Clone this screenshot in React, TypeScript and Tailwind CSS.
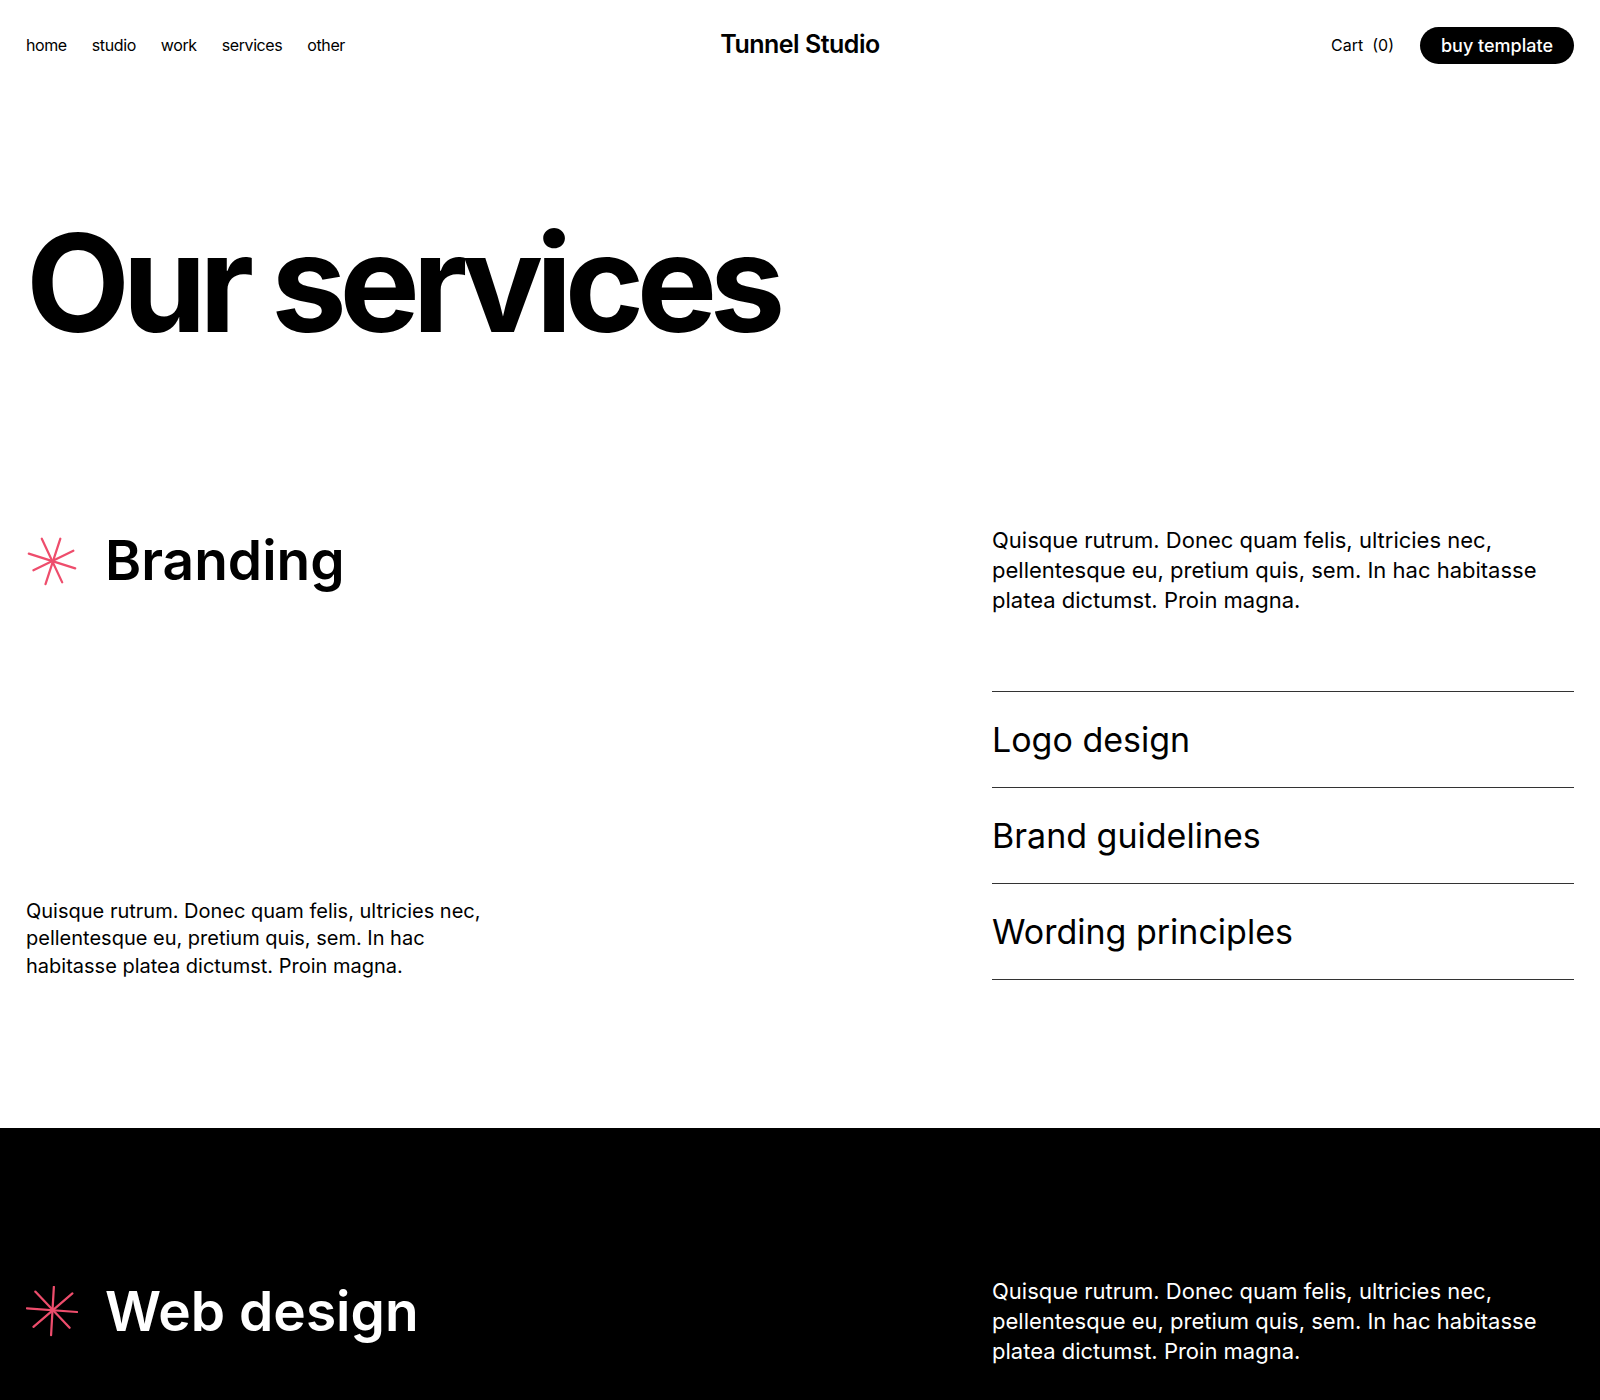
const items = ["Logo design", "Brand guidelines", "Wording principles"];

const copy =
  "Quisque rutrum. Donec quam felis, ultricies nec, pellentesque eu, pretium quis, sem. In hac habitasse platea dictumst. Proin magna.";

function BrandingStar() {
  return (
    <svg width="52" height="52" viewBox="4 4 56 56" fill="none" className="shrink-0">
      <g stroke="#ee4d6c" strokeWidth="2.4" strokeLinecap="round">
        <line x1="7" y1="24" x2="57" y2="40" />
        <line x1="12" y1="42" x2="55" y2="21" />
        <line x1="21" y1="8" x2="43" y2="55" />
        <line x1="41" y1="8" x2="25" y2="57" />
      </g>
    </svg>
  );
}

function WebStar() {
  return (
    <svg width="52" height="52" viewBox="4 4 56 56" fill="none" className="shrink-0">
      <g stroke="#ee4d6c" strokeWidth="2.4" strokeLinecap="round">
        <line x1="34" y1="5" x2="31" y2="57" />
        <line x1="5" y1="28" x2="59" y2="32" />
        <line x1="14" y1="10" x2="51" y2="49" />
        <line x1="54" y1="12" x2="12" y2="48" />
      </g>
    </svg>
  );
}

export default function App() {
  return (
    <div className="min-h-[1400px] bg-white font-['Inter',sans-serif] text-black">
      {/* header */}
      <header className="grid h-[88px] grid-cols-3 items-center px-[26px] pt-[2px]">
        <nav className="flex items-center gap-[25px] text-[16px] tracking-[-0.025em]">
          <a>home</a>
          <a>studio</a>
          <a>work</a>
          <a>services</a>
          <a>other</a>
        </nav>
        <div className="text-center text-[25px] font-semibold tracking-[-0.02em]">Tunnel Studio</div>
        <div className="flex items-center justify-end gap-[26px]">
          <span className="text-[16px]">Cart&nbsp;&nbsp;(0)</span>
          <button className="h-[37px] rounded-full bg-black px-[21px] text-[18px] font-medium text-white">
            buy template
          </button>
        </div>
      </header>

      {/* hero */}
      <section className="px-[26px] pt-[128px] pb-[26px]">
        <h1 className="text-[135px] leading-none font-bold tracking-[-0.055em]">Our services</h1>
      </section>

      {/* branding */}
      <section className="grid grid-cols-[1fr_582px] px-[26px] py-[148px]">
        <div className="flex flex-col justify-between">
          <div className="mt-[8px] flex items-center gap-[27px]">
            <BrandingStar />
            <h2 className="text-[55px] leading-none font-semibold">Branding</h2>
          </div>
          <p className="max-w-[480px] text-[20px] leading-[27.5px]">{copy}</p>
        </div>
        <div>
          <p className="text-[22px] leading-[30px]">{copy}</p>
          <ul className="mt-[76px] border-b border-[#333]">
            {items.map((item) => (
              <li key={item} className="flex h-[96px] items-center border-t border-[#333] text-[34px]">
                {item}
              </li>
            ))}
          </ul>
        </div>
      </section>

      {/* web design */}
      <section className="grid min-h-[272px] grid-cols-[1fr_582px] bg-black px-[26px] pt-[148px] text-white">
        <div>
          <div className="mt-[8px] flex items-center gap-[27px]">
            <WebStar />
            <h2 className="text-[55px] leading-none font-semibold">Web design</h2>
          </div>
        </div>
        <div>
          <p className="text-[22px] leading-[30px]">{copy}</p>
        </div>
      </section>
    </div>
  );
}
